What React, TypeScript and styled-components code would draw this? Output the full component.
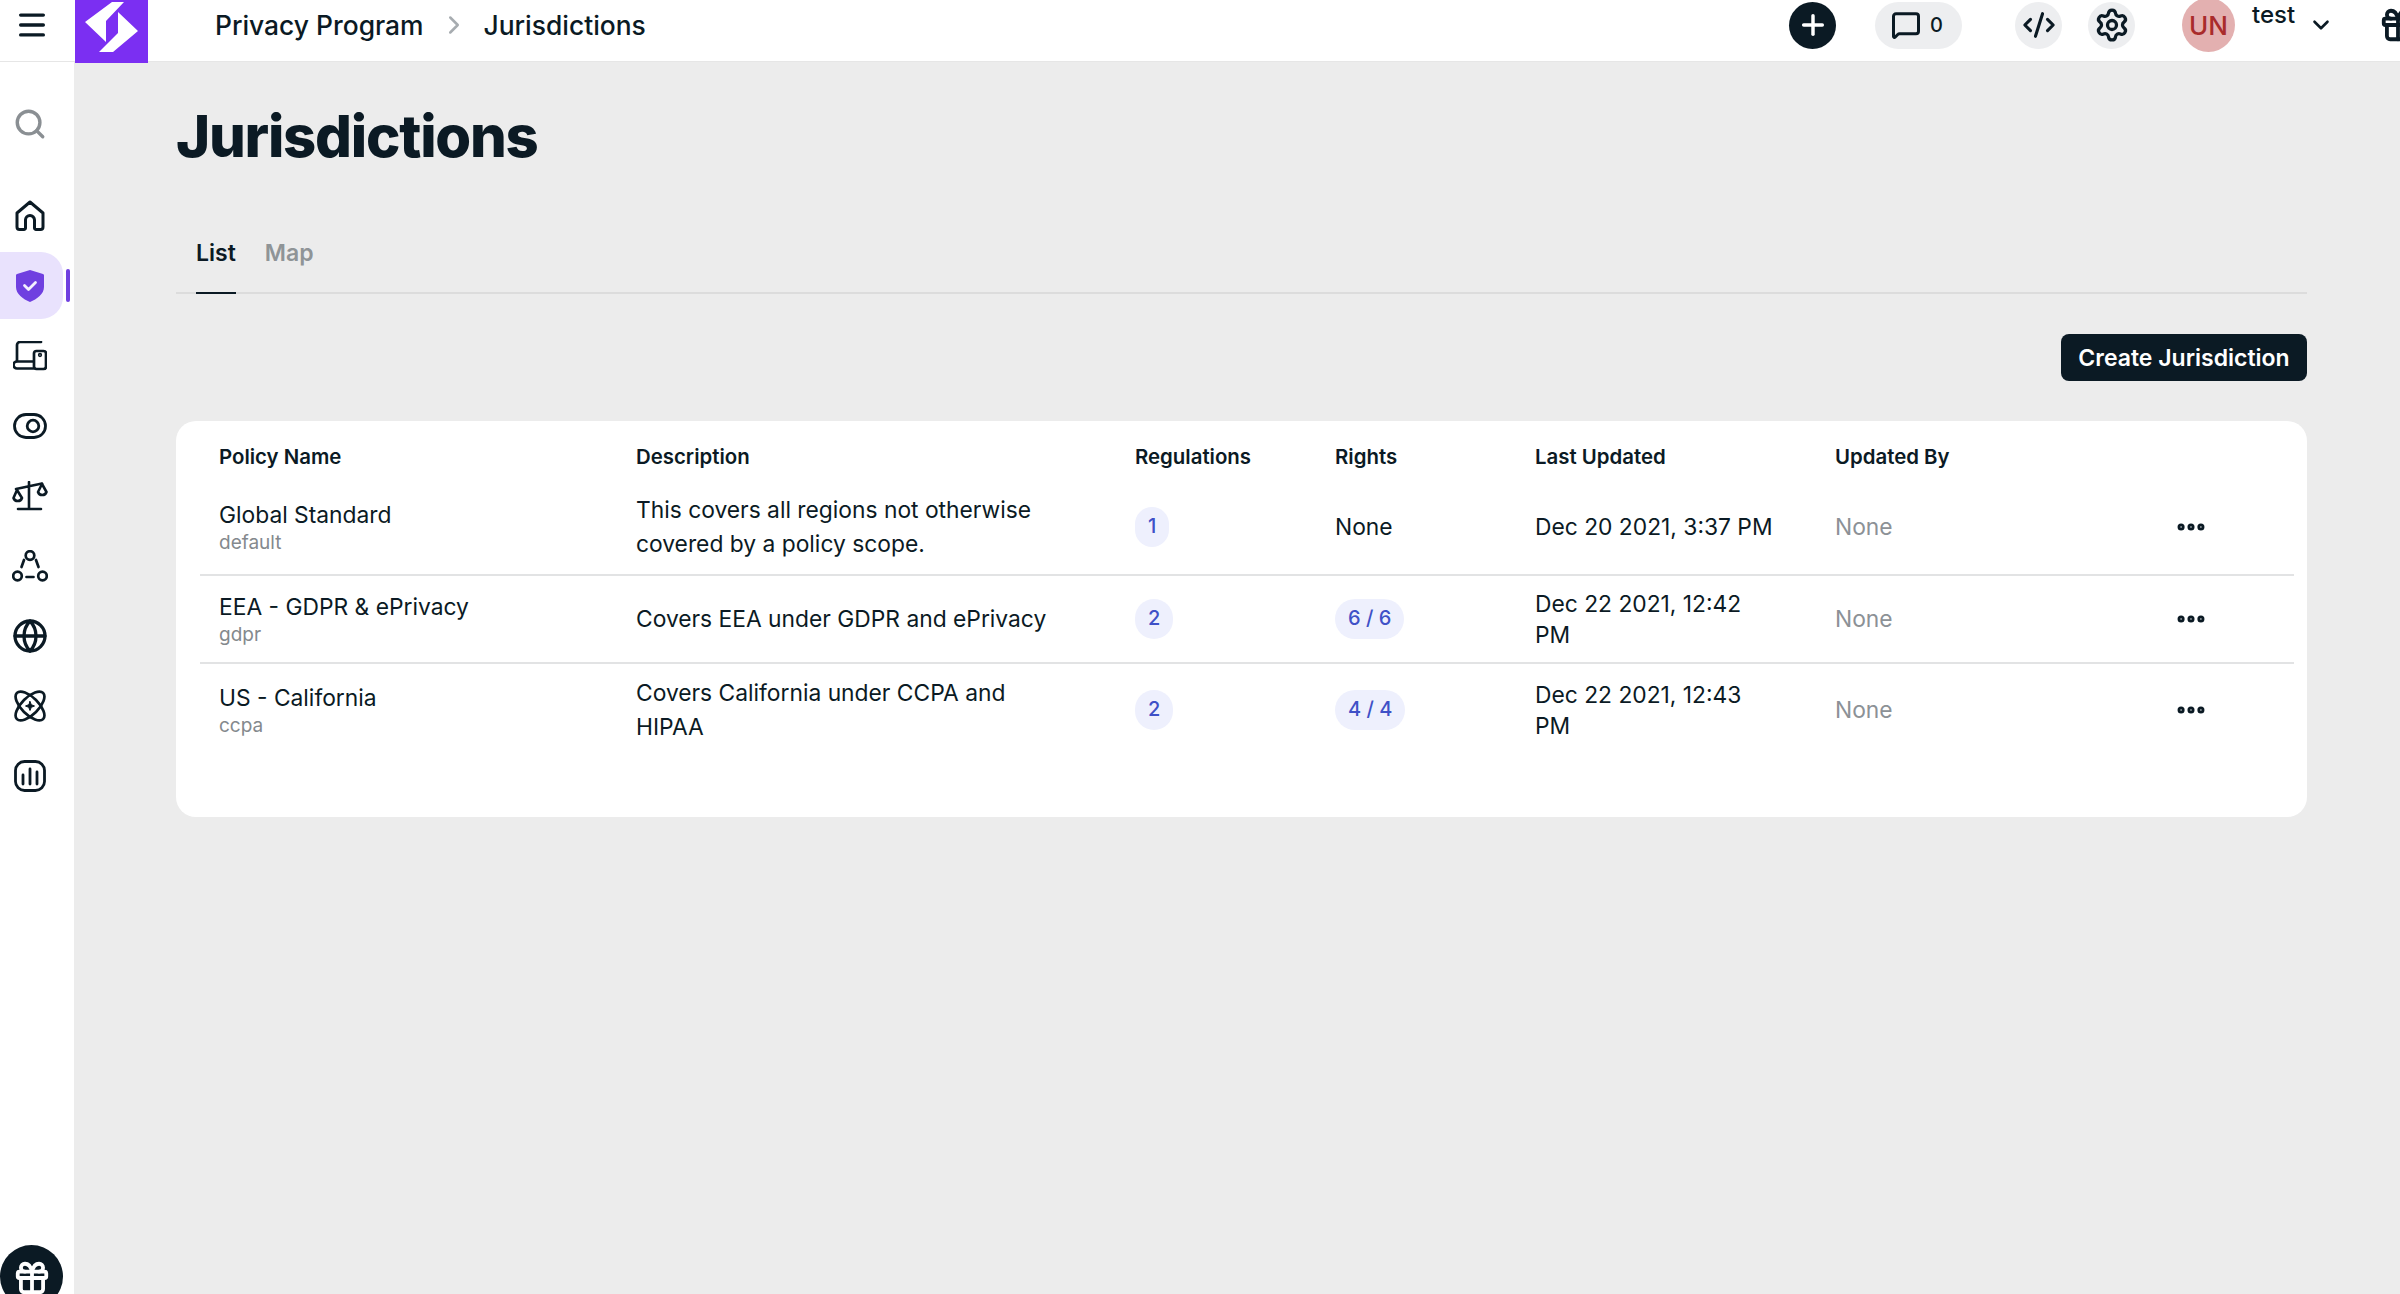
import React from "react";
import styled, { createGlobalStyle } from "styled-components";
import { Menu, Search, Plus, MessageSquare, CodeXml, Settings, ChevronDown, ChevronRight, Gift, Globe, Ellipsis } from "lucide-react";

const dark = "#0b1a24";

const Global = createGlobalStyle`
  html, body { margin: 0; padding: 0; background: #ececec; }
  body { font-family: Inter, "Liberation Sans", sans-serif; color: ${dark}; }
  * { box-sizing: border-box; }
`;

const Shell = styled.div`
  width: 2400px; height: 1294px; overflow: hidden; display: flex; flex-direction: column; background: #ececec;
`;
const TopBar = styled.header`
  height: 62px; flex: none; background: #fff; display: flex; align-items: flex-start; border-bottom: 1px solid #e6e6e6;
`;
const MenuSlot = styled.div`
  width: 75px; height: 50px; display: flex; align-items: center; justify-content: center; padding-right: 12px;
`;
const Logo = styled.div`
  width: 73px; height: 63px; background: #7b2ff2; flex: none; position: relative; z-index: 2; display: flex;
`;
const Crumbs = styled.nav`
  margin-left: 67px; height: 49px; display: flex; align-items: center; font-size: 26.400px; font-weight: 500;
`;
const CrumbSep = styled.span`
  display: flex; color: #a7acb0; margin: 0 15px 0 15px;
`;
const TopActions = styled.div`
  margin-left: auto; height: 50px; display: flex; align-items: center; flex: none; width: 612px; padding-left: 1px;
`;
const PlusBtn = styled.div`
  width: 47px; height: 47px; border-radius: 50%; background: ${dark}; color: #fff; display: flex; align-items: center; justify-content: center; flex: none;
`;
const CommentPill = styled.div`
  width: 87px; height: 47px; margin-left: 39px; border-radius: 24px; background: #edeef0; display: flex; align-items: center; gap: 9px; padding-left: 16px; font-size: 20px; font-weight: 500; flex: none;
`;
const RoundBtn = styled.div<{ $ml: number }>`
  width: 47px; height: 47px; margin-left: ${p => p.$ml}px; border-radius: 50%; background: #edeef0; display: flex; align-items: center; justify-content: center; flex: none;
`;
const Avatar = styled.div`
  width: 53px; height: 54px; margin-left: 47px; border-radius: 50%; background: #e3b0b0; color: #a92b2b; display: flex; align-items: center; justify-content: center; font-size: 26px; font-weight: 500; flex: none;
`;
const UserName = styled.span`
  font-size: 24px; font-weight: 500; margin: -20px 0 0 17px; line-height: 30px; flex: none;
`;
const UserChevron = styled.span`
  display: flex; margin-left: 13px; flex: none;
`;
const TopGift = styled.span`
  display: flex; margin-left: 45px; flex: none;
`;
const Body = styled.div`
  flex: 1; min-height: 0; display: flex;
`;
const Side = styled.aside`
  width: 74px; flex: none; background: #fff; display: flex; flex-direction: column; align-items: stretch; padding-top: 28px;
`;
const SideItem = styled.div<{ $mb?: number }>`
  height: 67px; width: 63px; margin-bottom: ${p => p.$mb ?? 3}px; padding-right: 3px; display: flex; align-items: center; justify-content: center; flex: none; color: ${dark};
`;
const ActiveItem = styled(SideItem)`
  position: relative; background: #e9e2fd; border-radius: 0 22px 22px 0; color: #6f3fe0;
  &::after { content: ""; position: absolute; left: 66px; top: 17px; width: 4px; height: 33px; border-radius: 2px; background: #6f3fe0; }
`;
const GiftFab = styled.div`
  margin-top: auto; margin-bottom: -14px; width: 63px; height: 63px; flex: none; border-radius: 50%; background: ${dark}; color: #fff; display: flex; justify-content: center; padding-top: 14px;
`;
const Main = styled.main`
  flex: 1; min-width: 0; padding: 40px 93px 0 102px;
`;
const Title = styled.h1`
  margin: 0; font-size: 58px; line-height: 68px; font-weight: 800; letter-spacing: -1.25px;
`;
const Tabs = styled.div`
  height: 87px; border-bottom: 2px solid #dcdcdc; display: flex; gap: 29px; padding: 0 0 0 20px; margin-top: 37px;
`;
const Tab = styled.div<{ $active?: boolean }>`
  height: 87px; display: flex; align-items: center; font-size: 23px; font-weight: 600;
  padding-top: ${p => (p.$active ? 6 : 5)}px;
  color: ${p => (p.$active ? dark : "#8f9497")};
  border-bottom: ${p => (p.$active ? `2px solid ${dark}` : "none")};
`;
const ActionRow = styled.div`
  margin-top: 40px; display: flex; justify-content: flex-end;
`;
const CreateBtn = styled.button`
  width: 246px; height: 47px; margin-bottom: 1px; border: 0; border-radius: 8px; background: ${dark}; color: #fff; font: 600 23px Inter, sans-serif; padding: 0;
`;
const Card = styled.section`
  margin-top: 39px; height: 396px; background: #fff; border-radius: 20px; padding: 0 13px 0 24px;
`;
const Row = styled.div<{ $h: number; $line?: boolean }>`
  display: grid; grid-template-columns: 417px 499px 200px 200px 300px 1fr 120px; align-items: center; height: ${p => p.$h}px;
  border-bottom: ${p => (p.$line ? "2px solid #e2e3e4" : "none")};
`;
const HeadRow = styled(Row)`
  padding-top: 13px;
`;
const Head = styled.div`
  padding-left: 19px; font-size: 20.400px; font-weight: 600;
`;
const Cell = styled.div<{ $muted?: boolean }>`
  padding-left: 19px; padding-right: 39px; font-size: 22.800px; line-height: 33.500px; color: ${p => (p.$muted ? "#8c9196" : dark)};
`;
const DateCell = styled(Cell)`
  line-height: 31px;
`;
const Name = styled.div`
  font-size: 22.800px; line-height: 32px;
`;
const Key = styled.div`
  font-size: 19px; line-height: 24px; color: #84898d;
`;
const Badge = styled.span`
  display: inline-flex; align-items: center; height: 40px; padding: 0 13px; border-radius: 20px; background: #eef0fd; color: #3f51c7; font-size: 20px; font-weight: 500; vertical-align: middle;
`;
const Dots = styled.div`
  display: flex; color: ${dark};
`;

const stroke = { fill: "none", stroke: "currentColor", strokeWidth: 2.1, strokeLinecap: "round" as const, strokeLinejoin: "round" as const };

const HomeIcon = () => (
  <svg width="32" height="32" viewBox="0 0 32 32" {...stroke} strokeWidth={3}>
    <path d="M3 13 L16 2 L29 13 V27 a2.500 2.500 0 0 1 -2.500 2.500 H22 a1.500 1.500 0 0 1 -1.500 -1.500 V20 a4.500 4.500 0 0 0 -9 0 V28 a1.500 1.500 0 0 1 -1.500 1.500 H5.500 A2.500 2.500 0 0 1 3 27 Z" />
  </svg>
);
const ShieldIcon = () => (
  <svg width="28" height="32" viewBox="0 0 28 32">
    <path d="M14 0 L27 4 a1.500 1.500 0 0 1 1 1.500 V17 C28 24 21 29 14 32 C7 29 0 24 0 17 V5.500 A1.500 1.500 0 0 1 1 4 Z" fill="currentColor" />
    <path d="M8.500 15.500 L12.500 19.500 L19.500 12.500" fill="none" stroke="#f3effe" strokeWidth="2.800" strokeLinecap="round" strokeLinejoin="round" />
  </svg>
);
const DevicesIcon = () => (
  <svg width="34" height="30" viewBox="0 0 34 30" {...stroke} strokeWidth={2.7}>
    <path d="M4 20 V4 a3 3 0 0 1 3 -3 H28" />
    <path d="M20 27.500 H4 a2.700 2.700 0 0 1 0 -7 H20" />
    <rect x="21" y="10" width="12" height="18" rx="2.500" />
    <circle cx="27" cy="14" r="0.800" />
  </svg>
);
const EyeIcon = () => (
  <svg width="34" height="26" viewBox="0 0 34 26" {...stroke} strokeWidth={2.8}>
    <rect x="1.500" y="1.500" width="31" height="23" rx="11.500" />
    <circle cx="20" cy="13" r="5.800" />
  </svg>
);
const ScaleIcon = () => (
  <svg width="36" height="30" viewBox="0 0 36 30" {...stroke} strokeWidth={2.6}>
    <path d="M17 1 V27 M6 28 H29 M4 8 L30 2.500" />
    <path d="M5 9 L1.500 17 a4.500 4.500 0 0 0 8.500 0 Z" />
    <path d="M30 3 L26 11 a4.500 4.500 0 0 0 8.500 0 Z" />
  </svg>
);
const NodesIcon = () => (
  <svg width="36" height="32" viewBox="0 0 36 32" {...stroke} strokeWidth={2.7}>
    <circle cx="18" cy="5.500" r="4.300" />
    <circle cx="5.500" cy="26" r="4.300" />
    <circle cx="30.500" cy="26" r="4.300" />
    <path d="M12 10 L9.500 17 M24 10 L26.500 17 M14.500 27 H21.500" />
  </svg>
);
const AtomIcon = () => (
  <svg width="32" height="32" viewBox="0 0 32 32" {...stroke} strokeWidth={2.7}>
    <ellipse cx="16" cy="16" rx="18.500" ry="8.500" transform="rotate(45 16 16)" />
    <ellipse cx="16" cy="16" rx="18.500" ry="8.500" transform="rotate(-45 16 16)" />
    <path d="M16 11.500 L17.300 14.700 L20.500 16 L17.300 17.300 L16 20.500 L14.700 17.300 L11.500 16 L14.700 14.700 Z" fill="currentColor" strokeWidth={1} />
  </svg>
);
const ChartIcon = () => (
  <svg width="32" height="32" viewBox="0 0 32 32" {...stroke} strokeWidth={2.8}>
    <rect x="1.500" y="1.500" width="29" height="29" rx="9" />
    <path d="M9 15 V24 M16 9 V24 M23 12 V24" />
  </svg>
);
const LogoMark = () => (
  <svg width="73" height="63" viewBox="0 0 73 63">
    <path d="M37 2 H49 L31 21 V42 L10 22 Z" fill="#fff" />
    <path d="M43 12 L63 31 L38 52 H24 L43 33 Z" fill="#fff" />
  </svg>
);

const rows = [
  { h: 97, line: true, name: "Global Standard", key: "default", desc: "This covers all regions not otherwise covered by a policy scope.", reg: "1", rights: null, date: "Dec 20 2021, 3:37 PM" },
  { h: 88, line: true, name: "EEA - GDPR & ePrivacy", key: "gdpr", desc: "Covers EEA under GDPR and ePrivacy", reg: "2", rights: "6 / 6", date: "Dec 22 2021, 12:42 PM" },
  { h: 91, line: false, name: "US - California", key: "ccpa", desc: "Covers California under CCPA and HIPAA", reg: "2", rights: "4 / 4", date: "Dec 22 2021, 12:43 PM" },
];

export default function App() {
  return (
    <Shell>
      <Global />
      <TopBar>
        <MenuSlot><Menu size={34} strokeWidth={2.4} /></MenuSlot>
        <Logo><LogoMark /></Logo>
        <Crumbs>
          <span>Privacy Program</span>
          <CrumbSep><ChevronRight size={30} strokeWidth={2} /></CrumbSep>
          <span>Jurisdictions</span>
        </Crumbs>
        <TopActions>
          <PlusBtn><Plus size={32} strokeWidth={2.6} /></PlusBtn>
          <CommentPill><MessageSquare size={30} strokeWidth={2.4} /><span>0</span></CommentPill>
          <RoundBtn $ml={53}><CodeXml size={34} strokeWidth={2.2} /></RoundBtn>
          <RoundBtn $ml={26}><Settings size={36} strokeWidth={2.2} /></RoundBtn>
          <Avatar>UN</Avatar>
          <UserName>test</UserName>
          <UserChevron><ChevronDown size={26} strokeWidth={2.4} /></UserChevron>
          <TopGift><Gift size={38} strokeWidth={2.4} /></TopGift>
        </TopActions>
      </TopBar>
      <Body>
        <Side>
          <SideItem $mb={25}><Search size={34} strokeWidth={2.4} color="#8a8f93" /></SideItem>
          <SideItem><HomeIcon /></SideItem>
          <ActiveItem><ShieldIcon /></ActiveItem>
          <SideItem><DevicesIcon /></SideItem>
          <SideItem><EyeIcon /></SideItem>
          <SideItem><ScaleIcon /></SideItem>
          <SideItem><NodesIcon /></SideItem>
          <SideItem><Globe size={36} strokeWidth={2.2} /></SideItem>
          <SideItem><AtomIcon /></SideItem>
          <SideItem><ChartIcon /></SideItem>
          <GiftFab><Gift size={38} strokeWidth={2.4} /></GiftFab>
        </Side>
        <Main>
          <Title>Jurisdictions</Title>
          <Tabs>
            <Tab $active>List</Tab>
            <Tab>Map</Tab>
          </Tabs>
          <ActionRow><CreateBtn>Create Jurisdiction</CreateBtn></ActionRow>
          <Card>
            <HeadRow $h={58}>
              <Head>Policy Name</Head>
              <Head>Description</Head>
              <Head>Regulations</Head>
              <Head>Rights</Head>
              <Head>Last Updated</Head>
              <Head>Updated By</Head>
              <span />
            </HeadRow>
            {rows.map(r => (
              <Row key={r.key} $h={r.h} $line={r.line}>
                <Cell><Name>{r.name}</Name><Key>{r.key}</Key></Cell>
                <Cell>{r.desc}</Cell>
                <Cell><Badge>{r.reg}</Badge></Cell>
                <Cell>{r.rights ? <Badge>{r.rights}</Badge> : "None"}</Cell>
                <DateCell>{r.date}</DateCell>
                <Cell $muted>None</Cell>
                <Dots><Ellipsis size={34} strokeWidth={3} /></Dots>
              </Row>
            ))}
          </Card>
        </Main>
      </Body>
    </Shell>
  );
}
